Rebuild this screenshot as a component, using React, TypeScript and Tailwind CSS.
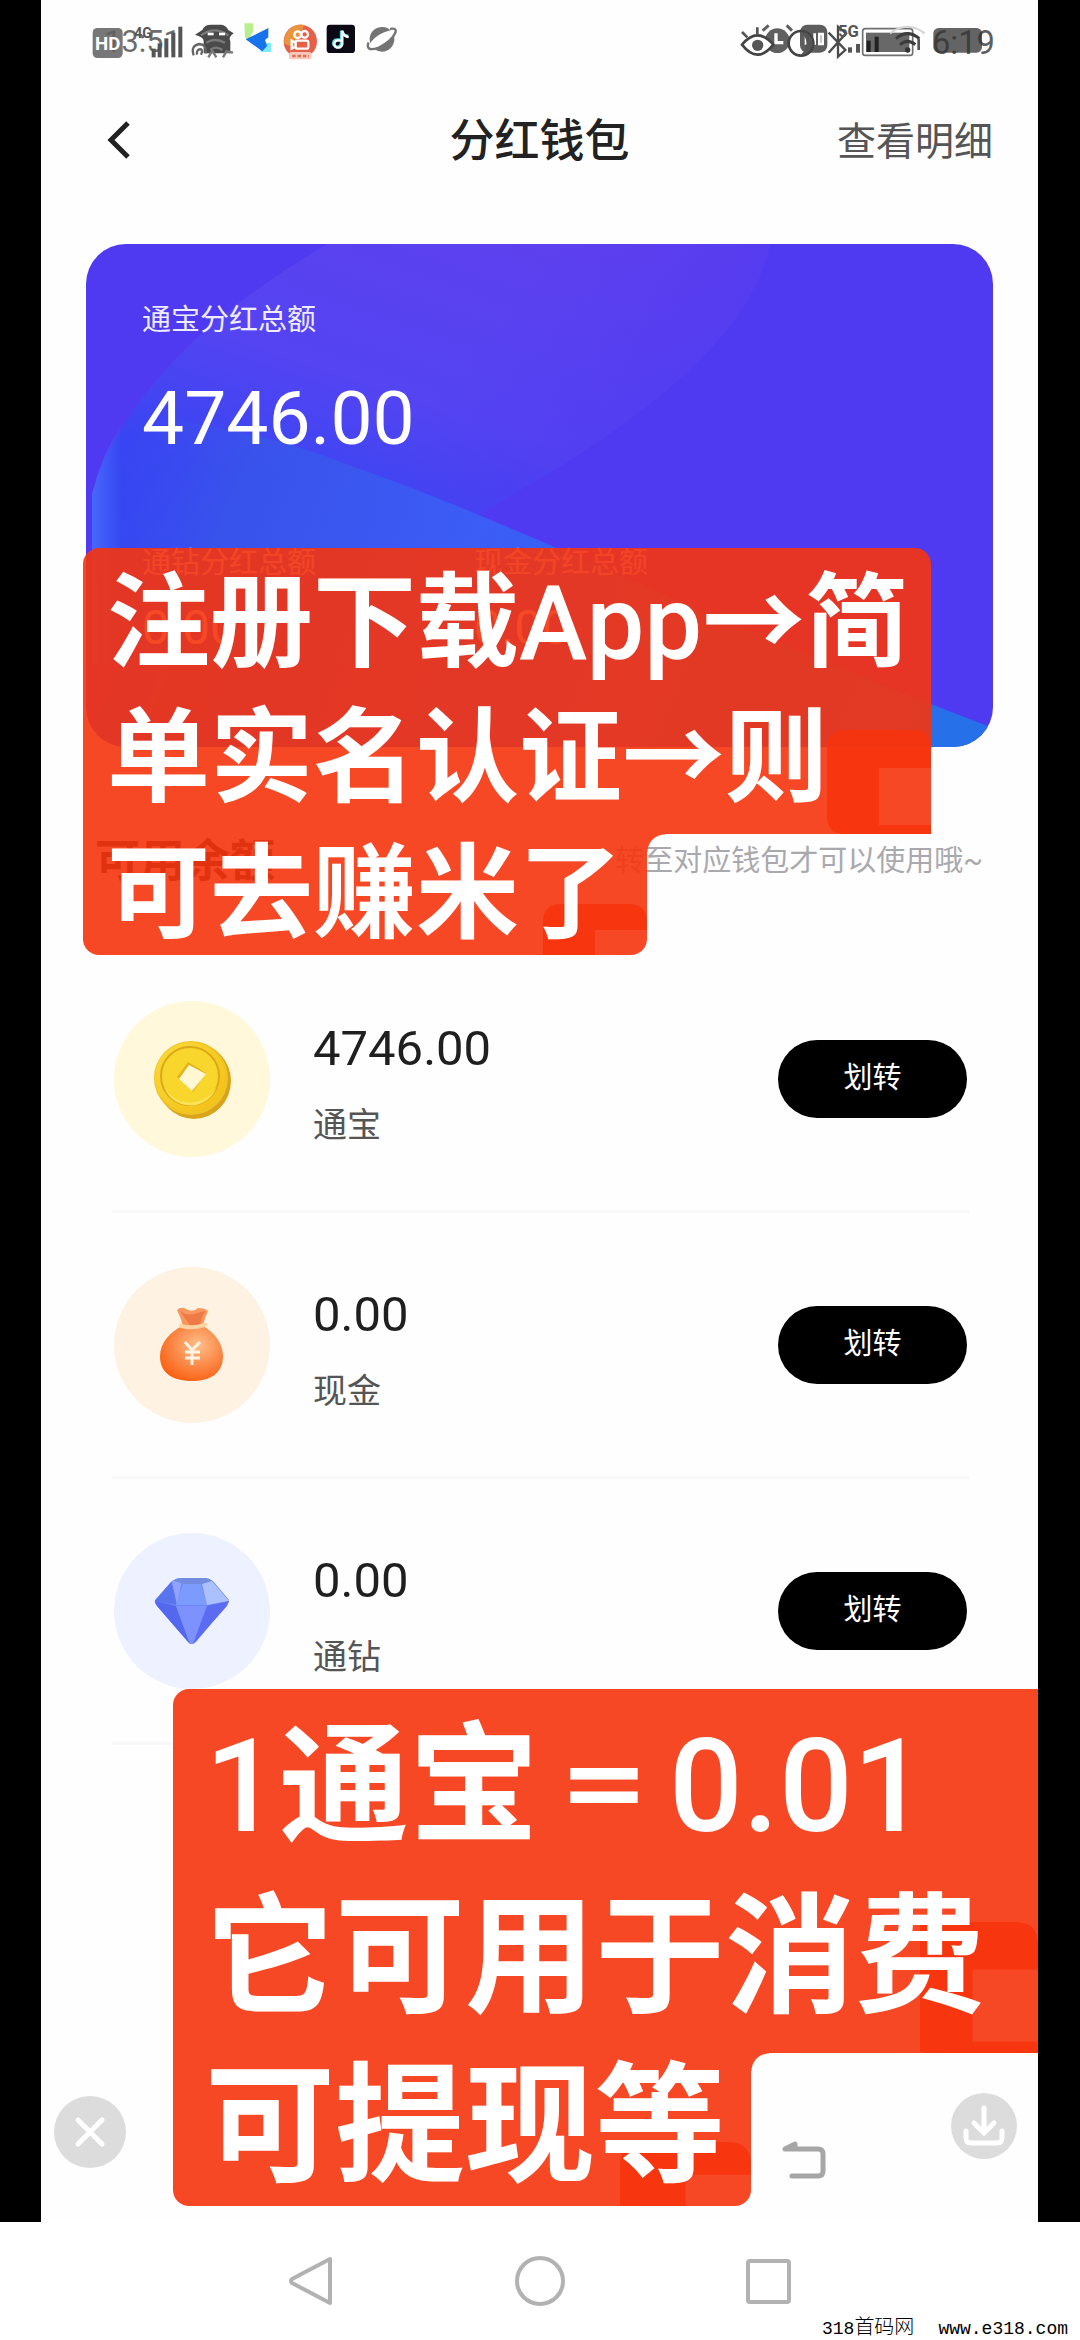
import { clsx } from 'clsx'
import type { ReactNode } from 'react'

interface Asset {
    id: string
    name: string
    amount: string
    tint: string
    icon: ReactNode
}

function CoinIcon() {
    return (
        <svg viewBox="0 0 80 80" className="w-20 h-20" aria-hidden="true">
            <defs>
                <linearGradient id="coin" x1="0" y1="0" x2="1" y2="1">
                    <stop offset="0" stopColor="#fbd93a" />
                    <stop offset="1" stopColor="#f3bf14" />
                </linearGradient>
            </defs>
            <ellipse cx="42" cy="42" rx="37" ry="38" fill="#d9a31c" />
            <ellipse cx="39" cy="39" rx="37" ry="37" fill="#eec424" />
            <ellipse cx="38" cy="38" rx="35" ry="35" fill="url(#coin)" />
            <ellipse cx="38" cy="37" rx="29" ry="29" fill="#f9d62c" stroke="#d9a91a" strokeWidth="2" />
            <path d="M12 48a28 28 0 0 0 53 -1a30 30 0 0 1 -53 1z" fill="#fbe257" />
            <path d="M36 23L54 34L41 53L25 38z" fill="#e4b21a" />
            <path d="M37 26L54 35L40 52L27 40z" fill="#fff8d2" />
        </svg>
    )
}

function MoneyBagIcon() {
    return (
        <svg viewBox="0 0 80 80" className="w-20 h-20" aria-hidden="true">
            <defs>
                <radialGradient id="bag" cx="0.6" cy="0.35" r="0.75">
                    <stop offset="0" stopColor="#ffc08a" />
                    <stop offset="0.5" stopColor="#fb8a4a" />
                    <stop offset="1" stopColor="#fa5a08" />
                </radialGradient>
            </defs>
            <path d="M25 5Q29 1 34 4Q41 8 46 3Q53 3 56 6Q52 15 51 21H31Q29 13 25 5z" fill="#f9975f" />
            <path d="M28 6Q36 12 45 8L53 6Q49 13 48 20H38Q33 14 28 6z" fill="#f07a45" />
            <path d="M30 21C18 27 8 38 8 51C8 67 19 76 40 76C61 76 71 66 71 51C71 38 62 27 51 21z" fill="url(#bag)" />
            <path d="M29 21Q40 24 53 20" stroke="#ffd3a0" strokeWidth="4" strokeLinecap="round" fill="none" />
            <path d="M33 37L40 45L48 37M40 45V60M33 47H48M33 53H48" stroke="#fff3e4" strokeWidth="3" fill="none" />
        </svg>
    )
}

function DiamondIcon() {
    return (
        <svg viewBox="0 0 80 80" className="w-20 h-20" aria-hidden="true">
            <path d="M3 29L20 10Q24 7 29 7H52Q57 7 61 10L77 29Q77 32 74 35L44 71Q40 75 36 71L5 35Q2 32 3 29z" fill="#6f86f8" />
            <path d="M3 30L19 11L25 34z" fill="#5a74ee" />
            <path d="M20 10L30 9L25 34z" fill="#8fa4ff" />
            <path d="M31 13H49L55 34H24z" fill="#7c9bff" />
            <path d="M22 10Q25 7 29 7H52Q57 7 60 10L50 13H31z" fill="#738be0" />
            <path d="M50 13L60 10L77 30L55 34z" fill="#abc0ff" />
            <path d="M3 30L24 35L38 73L5 35z" fill="#5468ef" />
            <path d="M24 35H55L41 73H38z" fill="#7d92ff" />
            <path d="M77 30L55 35L41 73L75 35z" fill="#5b6cf2" />
        </svg>
    )
}

const assets: Asset[] = [
    { id: 'tongbao', name: '通宝', amount: '4746.00', tint: 'bg-[#fff8db]', icon: <CoinIcon /> },
    { id: 'cash', name: '现金', amount: '0.00', tint: 'bg-[#fef2e3]', icon: <MoneyBagIcon /> },
    { id: 'diamond', name: '通钻', amount: '0.00', tint: 'bg-[#eef1ff]', icon: <DiamondIcon /> },
]

function StatusBar() {
    return (
        <div className="h-20 flex justify-between">
            {/* Clock, signal and app notifications */}
            <svg viewBox="0 0 1200 240" className="w-[400px] h-20" aria-hidden="true">
                <g fontFamily="Roboto, sans-serif">
                    <text x="190" y="156" fontSize="92" fill="#444444" fillOpacity="0.8">13:51</text>
                    <rect x="155" y="84" width="90" height="90" rx="14" fill="#5f5f5f" fillOpacity="0.85" />
                    <text x="162" y="150" fontSize="56" fontWeight="700" fill="#ffffff">HD</text>
                    <text x="280" y="113" fontSize="42" fontWeight="700" fill="#555555">4G</text>
                </g>
                <g fill="#555555">
                    <rect x="332" y="146" width="12" height="26" />
                    <rect x="350" y="130" width="12" height="42" />
                    <rect x="370" y="115" width="12" height="57" />
                    <rect x="391" y="98" width="12" height="74" />
                    <rect x="412" y="80" width="12" height="92" />
                </g>
                <path d="M484 90Q490 74 510 74H540Q556 76 562 90L578 100Q560 112 568 124V160H488V124Q490 112 462 104z" fill="#4a4a4a" />
                <path d="M480 106Q520 76 562 106M496 128Q522 112 552 128M508 150Q524 136 544 150" stroke="#7a7a7a" strokeWidth="7" fill="none" />
                <rect x="500" y="98" width="18" height="8" fill="#fff" />
                <rect x="534" y="98" width="18" height="8" fill="#fff" />
                <path d="M458 166Q448 136 476 132Q498 134 494 160M468 164Q466 146 480 148Q486 152 480 164" stroke="#666" strokeWidth="7" fill="none" />
                <path d="M502 172L514 152L526 172M546 172L556 154L576 158" stroke="#777" strokeWidth="7" fill="none" />
                <path d="M610 70H636V96L620 124L612 110z" fill="#b9ee8e" />
                <path d="M650 128H690V156H660z" fill="#7fe8fb" />
                <path d="M614 118L682 84V112L672 120L678 138L664 154z" fill="#1673ec" />
                <circle cx="778" cy="124" r="50" fill="#e85f48" />
                <path d="M730 132A50 50 0 0 1 790 75L760 140z" fill="#e9953f" />
                <rect x="744" y="156" width="68" height="22" rx="8" fill="#f9c9bd" />
                <g stroke="#fff" strokeWidth="7" fill="none">
                    <circle cx="770" cy="104" r="10" />
                    <circle cx="791" cy="103" r="10" />
                    <rect x="764" y="122" width="38" height="24" rx="6" />
                    <path d="M764 128L752 122V146L764 140" />
                </g>
                <path d="M754 168H804" stroke="#e4694f" strokeWidth="8" strokeDasharray="10 6" />
                <rect x="857" y="74" width="85" height="85" rx="10" fill="#0c0814" />
                <path d="M897 120Q878 116 877 130Q880 144 894 140Q902 136 901 126V92Q906 108 922 108" stroke="#56dce2" strokeWidth="9" fill="none" />
                <path d="M900 122Q881 118 880 132Q883 146 897 142Q905 138 904 128V92Q908 110 923 111" stroke="#fff" strokeWidth="7" fill="none" />
                <g transform="rotate(-32 1023 118)">
                    <circle cx="1023" cy="118" r="37" fill="#747474" />
                    <ellipse cx="1023" cy="118" rx="44" ry="16" fill="#fff" />
                    <path d="M984 104Q960 124 1000 134Q1046 138 1068 122Q1080 112 1060 104" stroke="#747474" strokeWidth="7" fill="none" />
                </g>
            </svg>

            {/* System indicators, battery and time */}
            <svg viewBox="0 0 1014 240" className="w-[338px] h-20" aria-hidden="true">
                <circle cx="232" cy="122" r="37" fill="#606060" />
                <path d="M188 92L206 76M260 76L276 92" stroke="#606060" strokeWidth="9" />
                <path d="M228 100V128H250" stroke="#fff" strokeWidth="10" fill="none" />
                <path d="M126 134Q172 78 220 134Q172 194 126 134z" fill="#fff" stroke="#444" strokeWidth="8" />
                <circle cx="173" cy="136" r="17" fill="#555" />
                <path d="M126 96L142 112M172 82V104" stroke="#555" strokeWidth="8" />
                <rect x="300" y="74" width="82" height="84" rx="22" fill="#5d5d5d" />
                <path d="M318 100V134M344 100V134M318 116H344M358 102H368V132H358z" stroke="#fff" strokeWidth="8" fill="none" />
                <circle cx="303" cy="130" r="37" fill="none" stroke="#444" strokeWidth="8" />
                <path d="M303 96A34 34 0 0 1 303 164Q336 130 303 96z" fill="#555" />
                <path d="M386 98L436 150L414 170V80L438 100L386 158" stroke="#4b4b4b" strokeWidth="7" fill="none" />
                <text x="414" y="112" fontSize="50" fontWeight="700" fill="#555" fontFamily="Roboto, sans-serif">5G</text>
                <rect x="444" y="142" width="12" height="16" fill="#555" />
                <rect x="468" y="132" width="12" height="26" fill="#555" />
                <rect x="488" y="86" width="150" height="80" rx="8" fill="#fff" stroke="#707070" strokeWidth="5" />
                <rect x="498" y="98" width="130" height="58" fill="#686868" />
                <rect x="500" y="122" width="12" height="34" fill="#222" />
                <rect x="524" y="110" width="12" height="46" fill="#222" />
                <path d="M588 116Q622 86 658 116M600 134Q622 114 646 134" stroke="#3c3c3c" strokeWidth="9" fill="none" />
                <path d="M570 100Q622 60 674 100" stroke="#d5d5d5" strokeWidth="6" fill="none" />
                <circle cx="623" cy="150" r="8" fill="#333" />
                <path d="M656 116V150" stroke="#555" strokeWidth="8" />
                <rect x="700" y="84" width="146" height="74" rx="16" fill="#646464" />
                <text x="696" y="162" fontSize="98" fill="#333" fillOpacity="0.8" fontFamily="Roboto, sans-serif">6:19</text>
            </svg>
        </div>
    )
}

function CardBackground() {
    return (
        <svg viewBox="0 0 907 503" preserveAspectRatio="none" className="absolute inset-0 w-full h-full" aria-hidden="true">
            <defs>
                <linearGradient id="orb" x1="0.75" y1="0" x2="0.2" y2="1">
                    <stop offset="0" stopColor="#5e40ee" />
                    <stop offset="0.4" stopColor="#5444f2" />
                    <stop offset="0.65" stopColor="#3845f2" />
                    <stop offset="1" stopColor="#3047f3" />
                </linearGradient>
                <linearGradient id="fade" x1="0" y1="0" x2="1" y2="0.5">
                    <stop offset="0" stopColor="#4f39f1" stopOpacity="0" />
                    <stop offset="0.55" stopColor="#4f39f1" stopOpacity="0" />
                    <stop offset="1" stopColor="#4f39f1" stopOpacity="0.9" />
                </linearGradient>
                <linearGradient id="wave" gradientUnits="userSpaceOnUse" x1="50" y1="180" x2="860" y2="480">
                    <stop offset="0" stopColor="#3d50ee" stopOpacity="0" />
                    <stop offset="0.14" stopColor="#3854ea" stopOpacity="0.9" />
                    <stop offset="0.4" stopColor="#3c5cf6" />
                    <stop offset="1" stopColor="#2670ea" />
                </linearGradient>
                <linearGradient id="rim" x1="0" y1="0" x2="1" y2="0">
                    <stop offset="0" stopColor="#4668fa" />
                    <stop offset="1" stopColor="#4668fa" stopOpacity="0" />
                </linearGradient>
            </defs>
            <rect width="907" height="503" fill="#4f39f1" />
            <path d="M241 0C140 60 40 140 6 250V420H300L400 266C480 220 660 120 684 0z" fill="url(#orb)" />
            <path d="M241 0C140 60 40 140 6 250V420H300L400 266C480 220 660 120 684 0z" fill="url(#fade)" />
            <path d="M6 250C14 226 30 190 60 175C110 175 200 196 260 220C340 248 400 274 464 301C600 360 740 420 907 484V503H6z" fill="url(#wave)" />
            <path d="M6 250Q16 210 36 180V420H6z" fill="url(#rim)" />
        </svg>
    )
}

function BalanceCard() {
    return (
        <section className="relative overflow-hidden rounded-[40px] mx-[45px] mt-10 text-white">
            <CardBackground />
            <div className="relative px-14 pt-14 pb-[94px]">
                <p className="text-[29px] leading-10 text-white/90">通宝分红总额</p>
                <p className="mt-10 text-[75px] leading-[76px]">4746.00</p>
                <div className="mt-[87px] flex gap-[158px]">
                    <div>
                        <p className="text-[29px] leading-10 text-white/80">通钻分红总额</p>
                        <p className="mt-5 text-[49px] leading-[50px]">0.00</p>
                    </div>
                    <div>
                        <p className="text-[29px] leading-10 text-white/80">现金分红总额</p>
                        <p className="mt-5 text-[49px] leading-[50px]">0.00</p>
                    </div>
                </div>
            </div>
        </section>
    )
}

function AssetRow({ name, amount, tint, icon }: Asset) {
    return (
        <li className="h-[266px] flex items-center border-b-3 border-[#f8f8f8]">
            <div className={clsx('w-[156px] h-[156px] ml-[2px] rounded-full flex items-center justify-center', tint)}>
                {icon}
            </div>
            <div className="flex-1 ml-[43px] pt-3">
                <p className="text-[49px] leading-[56px] text-[#1f1f1f]">{amount}</p>
                <p className="mt-6 text-[34px] leading-[48px] text-[#555555]">{name}</p>
            </div>
            <button className="w-[189px] h-[78px] mr-[2px] rounded-full bg-black text-white text-[29px]">划转</button>
        </li>
    )
}

/* Second layer of the sticker colour in the lower right corner, with a cut-out */
function StickerPatch({ className, d }: { className: string; d: string }) {
    return (
        <svg viewBox="0 0 104 104" preserveAspectRatio="xMaxYMin slice" className={clsx('absolute right-0 bottom-0', className)} aria-hidden="true">
            <path d={d} fillRule="evenodd" fill="#f6340e" fillOpacity="0.9" />
        </svg>
    )
}

const upperPatch = 'M18 0H86Q104 0 104 18V104H18Q0 104 0 86V18Q0 0 18 0zM52 38V95H104V38z'
const lowerPatch = 'M18 0H86Q104 0 104 18V26H52V104H18Q0 104 0 86V18Q0 0 18 0z'

function Notch() {
    return <span className="absolute left-full top-0 size-[18px] bg-[radial-gradient(circle_at_100%_100%,transparent_17px,#f74826_18px)]" />
}

function StepsSticker() {
    return (
        <aside className="absolute left-[42px] top-[548px] text-white font-bold text-[103px]">
            <div className="relative w-[848px] h-[286px] pt-2 pl-6 rounded-t-2xl bg-[#f6340e]/90">
                <StickerPatch className="w-[104px] h-[104px]" d={upperPatch} />
                <p className="relative leading-[135px] whitespace-nowrap">
                    注册下载<span className="font-medium">App</span>→简
                    <br />
                    单实名认证→则
                </p>
            </div>
            <div className="relative w-[564px] h-[121px] pl-6 rounded-b-2xl bg-[#f6340e]/90">
                <Notch />
                <StickerPatch className="w-[104px] h-[51px]" d={lowerPatch} />
                <p className="relative leading-[121px] whitespace-nowrap">可去赚米了</p>
            </div>
        </aside>
    )
}

function RateSticker() {
    return (
        <aside className="absolute left-[132px] right-0 top-[1689px] text-white font-bold text-[130px]">
            <div className="relative h-[364px] pt-3 pl-8 rounded-tl-2xl bg-[#f6340e]/90">
                <StickerPatch className="w-[118px] h-[131px]" d={upperPatch} />
                <p className="relative leading-[171px] whitespace-nowrap">
                    <span className="font-medium">1</span>通宝
                    <span className="inline-block w-[130px] text-center text-[96px] leading-[130px] font-black align-[8px]">＝</span>
                    <span className="font-medium">0.01</span>
                    <br />
                    它可用于消费
                </p>
            </div>
            <div className="relative w-[578px] h-[153px] pl-8 rounded-b-2xl bg-[#f6340e]/90">
                <Notch />
                <StickerPatch className="w-[131px] h-16" d={lowerPatch} />
                <p className="relative leading-[148px] whitespace-nowrap">可提现等</p>
            </div>
        </aside>
    )
}

function FloatingActions() {
    return (
        <>
            <button aria-label="关闭" className="absolute left-[13px] bottom-[54px] w-[72px] h-[72px] rounded-full bg-[#dcdcdc] flex items-center justify-center">
                <svg viewBox="0 0 32 32" className="w-8 h-8" fill="none" stroke="#fff" strokeWidth="5" strokeLinecap="round">
                    <path d="M4 4L28 28M28 4L4 28" />
                </svg>
            </button>
            <button aria-label="返回" className="absolute left-[740px] bottom-[40px]">
                <svg viewBox="0 0 46 42" className="w-[46px] h-[42px]" fill="none" stroke="#a6a6a6" strokeWidth="5" strokeLinecap="round" strokeLinejoin="round">
                    <path d="M11 36H37Q42 36 42 31V14Q42 9 37 9H4L14 4V9" />
                </svg>
            </button>
            <button aria-label="下载" className="absolute right-[21px] bottom-[63px] w-[66px] h-[66px] rounded-full bg-[#dcdcdc] flex items-center justify-center">
                <svg viewBox="0 0 44 44" className="w-11 h-11" fill="none" stroke="#fff" strokeWidth="5" strokeLinecap="round" strokeLinejoin="round">
                    <path d="M22 4V28M12 19L22 29L32 19M4 27V34Q4 39 9 39H35Q40 39 40 34V27" />
                </svg>
            </button>
        </>
    )
}

function SystemNav() {
    return (
        <footer className="relative h-[118px] bg-white">
            <nav className="grid grid-cols-[1fr_50px_1fr] items-center gap-[181px] h-full">
                <button aria-label="返回键" className="justify-self-end">
                    <svg viewBox="0 0 46 52" className="w-[46px] h-[52px]" fill="none" stroke="#b2b2b2" strokeWidth="4" strokeLinejoin="round">
                        <path d="M42 4V48L4 28Q2 26 4 24z" />
                    </svg>
                </button>
                <button aria-label="主页" className="w-[50px] h-[50px] rounded-full border-4 border-[#b2b2b2]" />
                <button aria-label="多任务" className="w-[45px] h-[45px] rounded-sm border-4 border-[#b2b2b2]" />
            </nav>
            <p className="absolute right-3 bottom-0 flex gap-6 text-[18px] leading-[22px] text-black font-['Liberation_Mono','Noto_Sans_CJK_SC',monospace]">
                <span>318<span className="text-[20px] font-light">首码网</span></span>
                <span>www.e318.com</span>
            </p>
        </footer>
    )
}

export default function App() {
    return (
        <div className="min-h-screen flex flex-col bg-black font-[Roboto,'Noto_Sans_CJK_SC',sans-serif]" lang="zh-CN">
            <main className="relative flex-1 ml-[41px] mr-[42px] bg-[#fefefe] overflow-hidden">
                <StatusBar />

                <header className="h-[124px] grid grid-cols-3 items-center px-[45px]">
                    <button aria-label="返回" className="justify-self-start pl-5">
                        <svg viewBox="0 0 26 42" className="w-[26px] h-[42px]" fill="none" stroke="#222" strokeWidth="5">
                            <path d="M22 2L5 19L22 36" />
                        </svg>
                    </button>
                    <h1 className="text-center text-[45px] font-medium text-[#222222]">分红钱包</h1>
                    <a href="#details" className="justify-self-end text-[39px] text-[#555555]">查看明细</a>
                </header>

                <BalanceCard />

                <div className="mt-[83px] h-16 flex items-center justify-between pl-[54px] pr-[55px]">
                    <h2 className="text-[45px] font-bold text-[#222222]">可用余额</h2>
                    <p className="text-[29px] text-[#a9a9ad]">转至对应钱包才可以使用哦~</p>
                </div>

                <ul className="mt-[53px] ml-[71px] mr-[69px]">
                    {assets.map((asset) => (
                        <AssetRow key={asset.id} {...asset} />
                    ))}
                </ul>

                <FloatingActions />
                <StepsSticker />
                <RateSticker />
            </main>

            <SystemNav />
        </div>
    )
}
